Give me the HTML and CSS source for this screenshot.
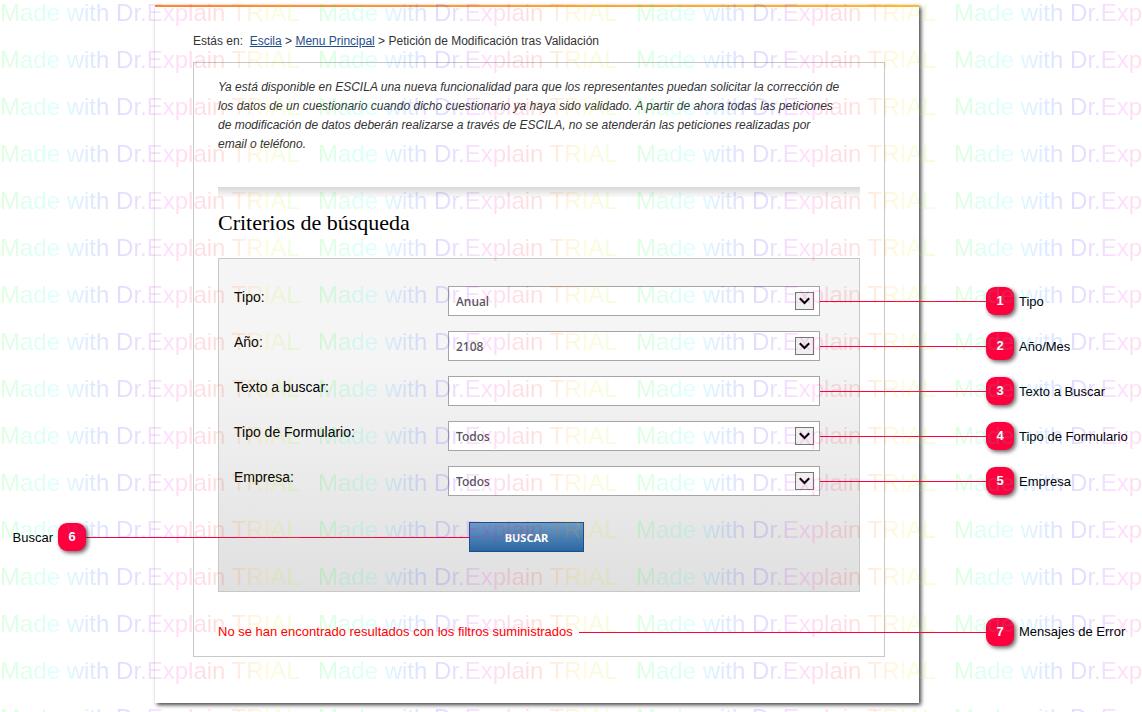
FILE: index.html
```
<!DOCTYPE html>
<html lang="es">
<head>
  <meta charset="UTF-8" />
  <meta name="viewport" content="width=device-width, initial-scale=1.0" />
  <title>Petición de Modificación tras Validación</title>
  <link rel="stylesheet" href="styles.css">
</head>
<body>
  <div class="page">
    <main class="sheet">
      <nav class="breadcrumb">
        Estás en:&nbsp; <a href="#">Escila</a> &gt; <a href="#">Menu Principal</a> &gt; Petición de Modificación tras Validación
      </nav>

      <div class="content">
        <p class="intro">
          Ya está disponible en ESCILA una nueva funcionalidad para que los representantes puedan solicitar la corrección de<br>
          los datos de un cuestionario cuando dicho cuestionario ya haya sido validado. A partir de ahora todas las peticiones<br>
          de modificación de datos deberán realizarse a través de ESCILA, no se atenderán las peticiones realizadas por<br>
          email o teléfono.
        </p>

        <h2 class="section-title">Criterios de búsqueda</h2>

        <form class="search-form" onsubmit="return false">
          <div class="row">
            <label for="tipo">Tipo:</label>
            <div class="field">
              <select id="tipo"><option>Anual</option></select>
              <svg class="arrow" viewBox="0 0 19 18"><rect x="0.5" y="0.5" width="18" height="17"/><path d="M4.8 6.3l4.7 4.7 4.7-4.7"/></svg>
              <div class="callout"><span class="tag"><b>1</b>Tipo</span></div>
            </div>
          </div>
          <div class="row">
            <label for="anio">Año:</label>
            <div class="field">
              <select id="anio"><option>2108</option></select>
              <svg class="arrow" viewBox="0 0 19 18"><rect x="0.5" y="0.5" width="18" height="17"/><path d="M4.8 6.3l4.7 4.7 4.7-4.7"/></svg>
              <div class="callout"><span class="tag"><b>2</b>Año/Mes</span></div>
            </div>
          </div>
          <div class="row">
            <label for="texto">Texto a buscar:</label>
            <div class="field">
              <input type="text" id="texto">
              <div class="callout"><span class="tag"><b>3</b>Texto a Buscar</span></div>
            </div>
          </div>
          <div class="row">
            <label for="formulario">Tipo de Formulario:</label>
            <div class="field">
              <select id="formulario"><option>Todos</option></select>
              <svg class="arrow" viewBox="0 0 19 18"><rect x="0.5" y="0.5" width="18" height="17"/><path d="M4.8 6.3l4.7 4.7 4.7-4.7"/></svg>
              <div class="callout"><span class="tag"><b>4</b>Tipo de Formulario</span></div>
            </div>
          </div>
          <div class="row">
            <label for="empresa">Empresa:</label>
            <div class="field">
              <select id="empresa"><option>Todos</option></select>
              <svg class="arrow" viewBox="0 0 19 18"><rect x="0.5" y="0.5" width="18" height="17"/><path d="M4.8 6.3l4.7 4.7 4.7-4.7"/></svg>
              <div class="callout"><span class="tag"><b>5</b>Empresa</span></div>
            </div>
          </div>
          <div class="actions">
            <button type="submit" class="search-btn">BUSCAR</button>
            <div class="callout callout-left"><span class="tag">Buscar<b>6</b></span></div>
          </div>
        </form>

        <div class="error-row">
          <p class="error">No se han encontrado resultados con los filtros suministrados</p>
          <div class="callout callout-error"><span class="tag"><b>7</b>Mensajes de Error</span></div>
        </div>
      </div>
    </main>
  </div>

  <div class="watermark" id="watermark" aria-hidden="true"></div>

  <script>
    const watermark = document.getElementById('watermark');
    const cols = Math.ceil(window.innerWidth / 318);
    const rows = Math.ceil(window.innerHeight / 47);

    for (let i = 0; i < rows; i++) {
      const line = document.createElement('div');
      line.className = 'watermark-row';
      for (let j = 0; j < cols; j++) {
        const mark = document.createElement('span');
        mark.textContent = 'Made with Dr.Explain TRIAL';
        line.appendChild(mark);
      }
      watermark.appendChild(line);
    }
  </script>
</body>
</html>
```
FILE: styles.css
```
* {
  margin: 0;
  padding: 0;
  box-sizing: border-box;
}

body {
  font-family: Arial, "Liberation Sans", sans-serif;
  font-size: 12px;
  color: #333;
  background: #fff;
  overflow-x: hidden;
}

.page {
  padding: 5px 223px 9px 155px;
}

.sheet {
  padding: 26px 34px 46px 38px;
  background: linear-gradient(to right, #ff8533, #fdb92e) top / 100% 2px no-repeat #fff;
  box-shadow: 2px 2px 4px rgba(0, 0, 0, 0.75);
}

/* breadcrumb */
.breadcrumb {
  line-height: 20px;
  margin-bottom: 11px;
}

.breadcrumb a {
  color: #1f4f8b;
}

.content {
  border: 1px solid #c8c8c8;
  padding: 15px 24px;
}

.intro {
  font-style: italic;
  line-height: 19px;
  padding-bottom: 33px;
}

.section-title {
  font-family: "Liberation Serif", serif;
  font-size: 22px;
  font-weight: normal;
  line-height: 24px;
  color: #000;
  padding: 24px 0 23px;
  background: linear-gradient(#d8d8d8, #fafafa) top / 100% 10px no-repeat;
}

/* search form */
.search-form {
  display: flex;
  flex-direction: column;
  gap: 15px;
  padding: 27px 39px 39px 15px;
  border: 1px solid #c8c8c8;
  background: linear-gradient(#f5f5f5 30%, #e0e0e0);
}

.row {
  display: flex;
}

.row label {
  width: 214px;
  font-size: 14px;
  line-height: 22px;
  color: #000;
}

.field {
  position: relative;
  flex: 1;
}

.field select,
.field input {
  display: block;
  width: 100%;
  height: 30px;
  padding: 0 7px;
  border: 1px solid #a5a5a5;
  border-radius: 0;
  background: #fff;
  font-family: "Noto Sans", sans-serif;
  font-size: 12px;
  font-weight: 500;
  color: #555;
  appearance: none;
}

.arrow {
  position: absolute;
  top: 6px;
  right: 6px;
  width: 19px;
  height: 18px;
  fill: #f0f0f0;
  stroke: #777;
  pointer-events: none;
}

.arrow path {
  fill: none;
  stroke: #000;
  stroke-width: 2;
}

.actions {
  position: relative;
  align-self: flex-start;
  margin: 11px 0 0 235px;
}

.search-btn {
  display: block;
  width: 115px;
  height: 30px;
  border: 1px solid #1f4f8b;
  background: linear-gradient(#6d9ac4, #2c67a2);
  color: #fff;
  font-family: "Noto Sans", sans-serif;
  font-size: 11px;
  font-weight: bold;
  cursor: pointer;
}

.error-row {
  display: flex;
  align-items: center;
  gap: 6px;
  padding-top: 31px;
}

.error {
  font-size: 13px;
  line-height: 18px;
  color: #f00;
}

/* numbered callouts */
.callout {
  position: absolute;
  top: 50%;
  left: 100%;
  width: 166px;
  height: 1px;
  background: #ff003f;
}

.callout-left {
  left: auto;
  right: 100%;
  width: 383px;
}

.callout-error {
  position: relative;
  top: 0;
  left: 0;
  flex: 1;
  margin-right: -126px;
}

.tag {
  position: absolute;
  top: -14px;
  left: 100%;
  display: flex;
  align-items: center;
  gap: 5px;
  font-size: 13px;
  white-space: nowrap;
  color: #000;
}

.callout-left .tag {
  left: auto;
  right: 100%;
}

.tag b {
  width: 28px;
  line-height: 28px;
  border-radius: 9px;
  background: #ff003f;
  box-shadow: 2px 2px 4px rgba(0, 0, 0, 0.6);
  color: #fff;
  text-align: center;
}

/* trial watermark over everything */
.watermark {
  position: fixed;
  inset: 0;
  overflow: hidden;
  opacity: 0.13;
  pointer-events: none;
}

.watermark-row {
  display: flex;
  height: 47px;
}

.watermark-row span {
  flex: none;
  width: 318px;
  font-size: 24px;
  line-height: 26px;
  white-space: nowrap;
  color: transparent;
  background: linear-gradient(to right, #0f0 0, #0fa 35px, #0ff 58px, #07f 85px, #00f 115px, #60f 140px, #f0f 165px, #f06 190px, #f00 215px, #f70 240px, #fd0 265px, #7f0 298px);
  background-clip: text;
  -webkit-background-clip: text;
}
```
